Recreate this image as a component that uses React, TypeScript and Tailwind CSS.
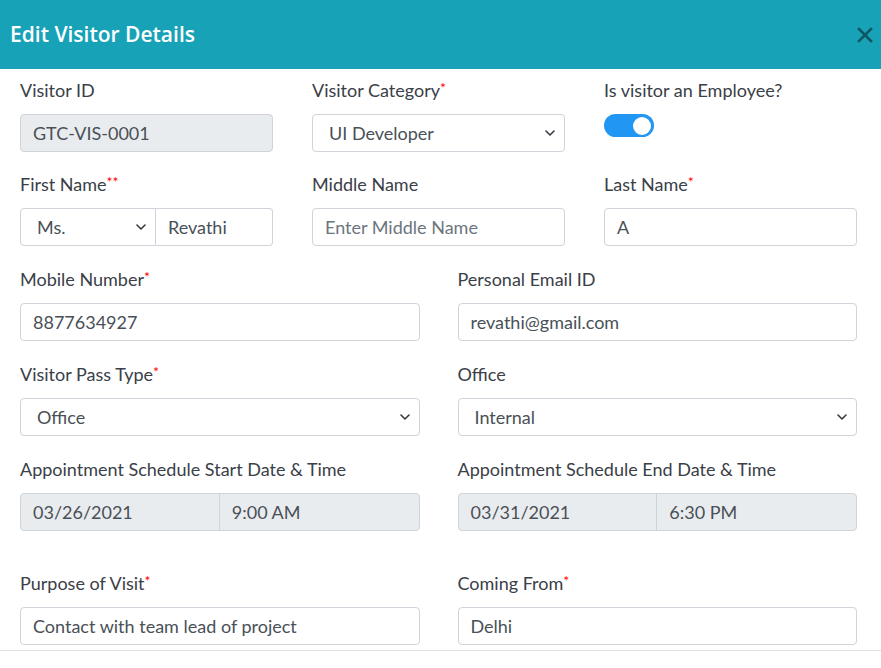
import React from "react";

const font = { fontFamily: "Lato, 'Noto Sans', sans-serif" };

function Req({ n = 1 }: { n?: number }) {
  return <span className="text-[#ff0000] text-[14px] align-top leading-none relative top-[3px]">{"*".repeat(n)}</span>;
}

function Label({ children }: { children: React.ReactNode }) {
  return <div className="h-6 leading-6 mb-3 text-[18px] text-[#3a4047] whitespace-nowrap">{children}</div>;
}

function Chevron() {
  return (
    <svg width="10" height="6" viewBox="0 0 10 6" className="absolute right-[9px] top-1/2 -translate-y-1/2">
      <path d="M1 1 L5 5 L9 1" fill="none" stroke="#343a40" strokeWidth="1.6" strokeLinecap="round" strokeLinejoin="round" />
    </svg>
  );
}

function Input({ value, placeholder, disabled }: { value?: string; placeholder?: string; disabled?: boolean }) {
  return (
    <div
      className={`h-[38px] flex items-center px-3 border border-[#ced4da] rounded-[4px] text-[18px] ${
        disabled ? "bg-[#e9ecef]" : "bg-white"
      } ${value ? "text-[#495057]" : "text-[#6c757d]"}`}
    >
      {value ?? placeholder}
    </div>
  );
}

function Select({ value }: { value: string }) {
  return (
    <div className="relative h-[38px] flex items-center pl-4 border border-[#ced4da] rounded-[4px] text-[18px] text-[#495057] bg-white">
      {value}
      <Chevron />
    </div>
  );
}

function DateTime({ date, time }: { date: string; time: string }) {
  return (
    <div className="h-[38px] flex border border-[#ced4da] rounded-[4px] bg-[#e9ecef] text-[18px] text-[#495057]">
      <div className="w-1/2 flex items-center px-3 border-r border-[#ced4da]">{date}</div>
      <div className="w-1/2 flex items-center px-3">{time}</div>
    </div>
  );
}

export default function App() {
  return (
    <div className="w-[881px] h-[668px] bg-white overflow-hidden" style={font}>
      <div className="h-[69px] bg-[#17a2b8] flex items-center justify-between pl-[10px] pr-[8px]">
        <div
          className="text-white text-[21px] font-semibold mt-[1px]"
          style={{ fontFamily: "'Open Sans', 'Noto Sans', sans-serif" }}
        >
          Edit Visitor Details
        </div>
        <svg width="16" height="16" viewBox="0 0 16 16" className="mt-[1px]">
          <path d="M2 2 L14 14 M14 2 L2 14" stroke="#0e5561" strokeWidth="2.6" strokeLinecap="square" />
        </svg>
      </div>
      <div className="pt-[9px] pl-[20px] pr-[24px] pb-[5px]">
        <div className="grid grid-cols-3 gap-x-[39px]">
          <div>
            <Label>Visitor ID</Label>
            <Input value="GTC-VIS-0001" disabled />
          </div>
          <div>
            <Label>
              Visitor Category<Req />
            </Label>
            <Select value="UI Developer" />
          </div>
          <div>
            <Label>Is visitor an Employee?</Label>
            <div className="w-[50px] h-[23px] rounded-full bg-[#2196f3] flex items-center justify-end pr-[3px]">
              <div className="w-[18px] h-[18px] rounded-full bg-white" />
            </div>
          </div>
        </div>

        <div className="grid grid-cols-3 gap-x-[39px] mt-[20px]">
          <div>
            <Label>
              First Name<Req n={2} />
            </Label>
            <div className="flex h-[38px]">
              <div className="relative w-[136px] h-[38px] flex items-center pl-4 border border-[#ced4da] rounded-l-[4px] text-[18px] text-[#495057] bg-white">
                Ms.
                <Chevron />
              </div>
              <div className="flex-1 h-[38px] flex items-center px-3 border border-l-0 border-[#ced4da] rounded-r-[4px] text-[18px] text-[#495057]">
                Revathi
              </div>
            </div>
          </div>
          <div>
            <Label>Middle Name</Label>
            <Input placeholder="Enter Middle Name" />
          </div>
          <div>
            <Label>
              Last Name<Req />
            </Label>
            <Input value="A" />
          </div>
        </div>

        <div className="grid grid-cols-2 gap-x-[38px] mt-[21px]">
          <div>
            <Label>
              Mobile Number<Req />
            </Label>
            <Input value="8877634927" />
          </div>
          <div>
            <Label>Personal Email ID</Label>
            <Input value="revathi@gmail.com" />
          </div>
        </div>

        <div className="grid grid-cols-2 gap-x-[38px] mt-[21px]">
          <div>
            <Label>
              Visitor Pass Type<Req />
            </Label>
            <Select value="Office" />
          </div>
          <div>
            <Label>Office</Label>
            <Select value="Internal" />
          </div>
        </div>

        <div className="grid grid-cols-2 gap-x-[38px] mt-[21px]">
          <div>
            <Label>Appointment Schedule Start Date &amp; Time</Label>
            <DateTime date="03/26/2021" time="9:00 AM" />
          </div>
          <div>
            <Label>Appointment Schedule End Date &amp; Time</Label>
            <DateTime date="03/31/2021" time="6:30 PM" />
          </div>
        </div>

        <div className="grid grid-cols-2 gap-x-[38px] mt-[40px]">
          <div>
            <Label>
              Purpose of Visit<Req />
            </Label>
            <Input value="Contact with team lead of project" />
          </div>
          <div>
            <Label>
              Coming From<Req />
            </Label>
            <Input value="Delhi" />
          </div>
        </div>
      </div>
      <div className="border-t border-[#dee2e6]" />
    </div>
  );
}
